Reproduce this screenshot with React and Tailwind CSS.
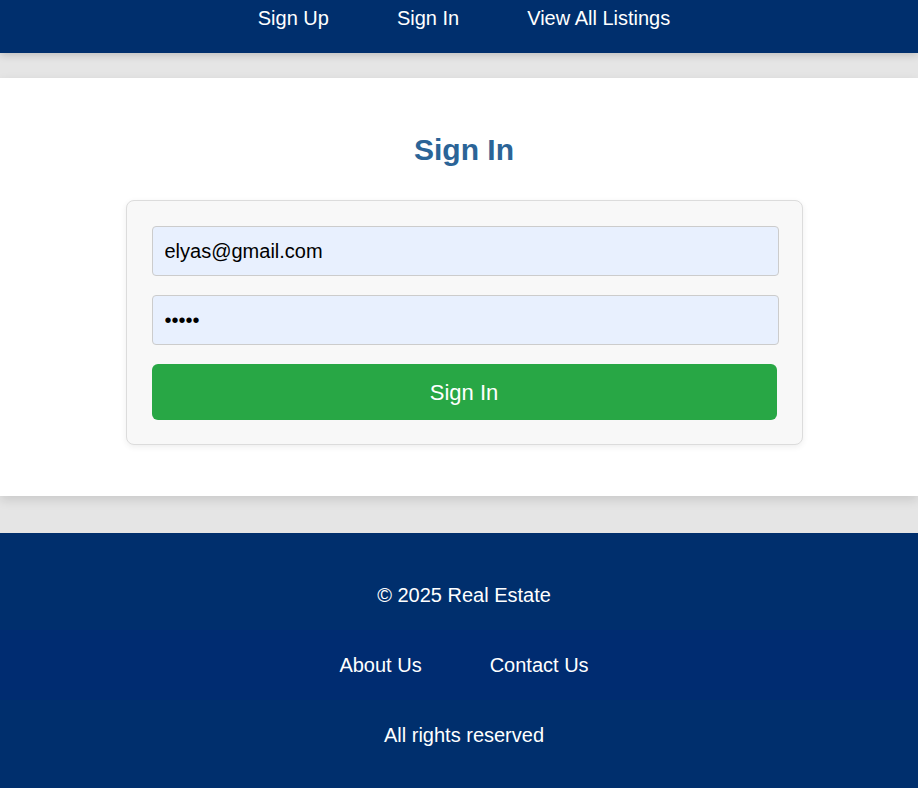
import React, { useState } from 'react';

const font = { fontFamily: '"Liberation Sans", Arial, sans-serif' };

const Header = () => (
  <header className="relative z-10 h-[53px] bg-[#002f6d] shadow-[0_2px_8px_rgba(0,0,0,0.18)]">
    <nav className="flex justify-center gap-[68px] pl-[10px] pt-[7px]">
      <a href="#" className="text-[20px] leading-[23px] text-white">Sign Up</a>
      <a href="#" className="text-[20px] leading-[23px] text-white">Sign In</a>
      <a href="#" className="text-[20px] leading-[23px] text-white">View All Listings</a>
    </nav>
  </header>
);

const SignInForm = () => {
  const [email, setEmail] = useState('elyas@gmail.com');
  const [password, setPassword] = useState('12345');

  return (
    <section className="relative mt-[25px] bg-white pt-[54px] pb-[51px] shadow-[0_4px_10px_rgba(0,0,0,0.12)]">
      <div className="pl-[10px]">
        <h2 className="text-center text-[30px] font-bold leading-[35px] text-[#2b6497]">Sign In</h2>
        {/* form card */}
        <form
          onSubmit={(e) => e.preventDefault()}
          className="mx-auto mt-[33px] w-[677px] rounded-lg border border-[#dcdcdc] bg-[#f8f8f8] px-[25px] pt-[25px] pb-[24px] shadow-[0_2px_6px_rgba(0,0,0,0.07)]"
        >
          <input
            type="email"
            value={email}
            onChange={(e) => setEmail(e.target.value)}
            className="block h-[50px] w-[627px] rounded border border-[#cccccc] bg-[#e8f0fe] px-[12px] text-[20px] text-black outline-none"
          />
          <input
            type="password"
            value={password}
            onChange={(e) => setPassword(e.target.value)}
            className="mt-[19px] block h-[50px] w-[627px] rounded border border-[#cccccc] bg-[#e8f0fe] px-[12px] text-[20px] text-black outline-none"
          />
          <button
            type="submit"
            className="mt-[19px] block h-[56px] w-full rounded-md bg-[#28a745] text-[22px] text-white"
          >
            Sign In
          </button>
        </form>
      </div>
    </section>
  );
};

const Footer = () => (
  <footer className="mt-[37px] bg-[#002f6d] pt-[26px] pb-[20px] text-white">
    <div className="flex h-[71px] items-center justify-center pl-[10px] text-[20px]">
      © 2025 Real Estate
    </div>
    <div className="flex h-[70px] items-center justify-center gap-[68px] bg-[#002c71] pl-[10px] text-[20px]">
      <a href="#">About Us</a>
      <a href="#">Contact Us</a>
    </div>
    <div className="flex h-[70px] items-center justify-center pl-[10px] text-[20px]">
      All rights reserved
    </div>
  </footer>
);

export default function App() {
  return (
    <div className="min-h-screen overflow-hidden bg-[#e5e5e5]" style={font}>
      <Header />
      <SignInForm />
      <Footer />
    </div>
  );
}
